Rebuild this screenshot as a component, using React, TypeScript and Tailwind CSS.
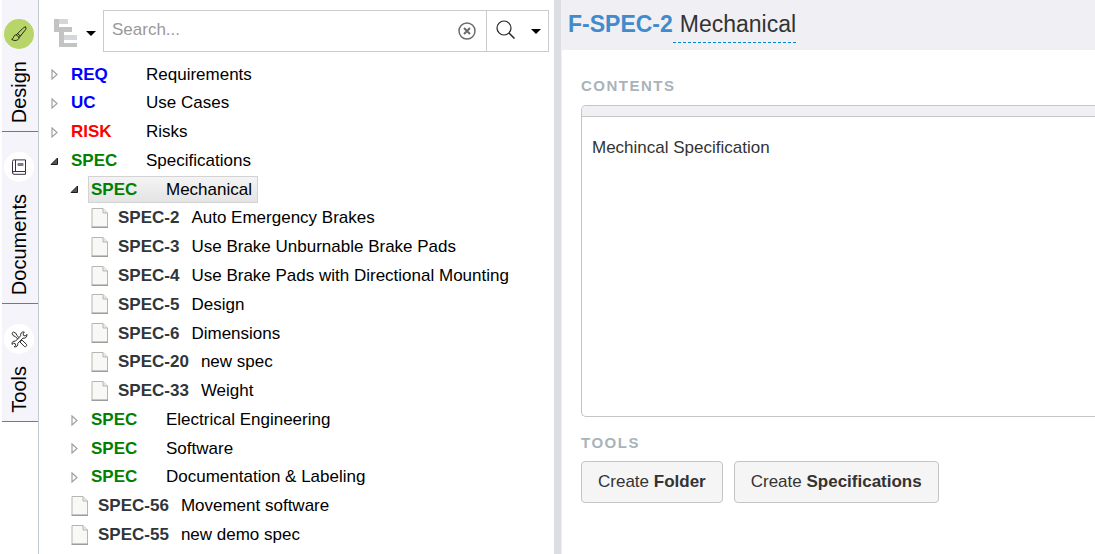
import type { ReactNode } from "react";

type Item = {
  level: number;
  kind: "closed" | "open" | "doc";
  code: string;
  label: string;
  tone: string;
  selected?: boolean;
};

const BLUE = "text-[#0000ff]";
const RED = "text-[#ff0000]";
const GREEN = "text-[#008000]";
const DARK = "text-[#30363a]";

const items: Item[] = [
  { level: 0, kind: "closed", code: "REQ", label: "Requirements", tone: BLUE },
  { level: 0, kind: "closed", code: "UC", label: "Use Cases", tone: BLUE },
  { level: 0, kind: "closed", code: "RISK", label: "Risks", tone: RED },
  { level: 0, kind: "open", code: "SPEC", label: "Specifications", tone: GREEN },
  { level: 1, kind: "open", code: "SPEC", label: "Mechanical", tone: GREEN, selected: true },
  { level: 2, kind: "doc", code: "SPEC-2", label: "Auto Emergency Brakes", tone: DARK },
  { level: 2, kind: "doc", code: "SPEC-3", label: "Use Brake Unburnable Brake Pads", tone: DARK },
  { level: 2, kind: "doc", code: "SPEC-4", label: "Use Brake Pads with Directional Mounting", tone: DARK },
  { level: 2, kind: "doc", code: "SPEC-5", label: "Design", tone: DARK },
  { level: 2, kind: "doc", code: "SPEC-6", label: "Dimensions", tone: DARK },
  { level: 2, kind: "doc", code: "SPEC-20", label: "new spec", tone: DARK },
  { level: 2, kind: "doc", code: "SPEC-33", label: "Weight", tone: DARK },
  { level: 1, kind: "closed", code: "SPEC", label: "Electrical Engineering", tone: GREEN },
  { level: 1, kind: "closed", code: "SPEC", label: "Software", tone: GREEN },
  { level: 1, kind: "closed", code: "SPEC", label: "Documentation & Labeling", tone: GREEN },
  { level: 1, kind: "doc", code: "SPEC-56", label: "Movement software", tone: DARK },
  { level: 1, kind: "doc", code: "SPEC-55", label: "new demo spec", tone: DARK },
];

const indents = ["pl-[10px]", "pl-[30px]", "pl-[50px]"];

function BrushIcon() {
  return (
    <svg width="18" height="18" viewBox="0 0 18 18" fill="none" stroke="#1d2410" strokeWidth="1" strokeLinejoin="round" strokeLinecap="round">
      <path d="M15.6 2.2c.8.5.6 1.500 0 2.400L10.400 11 7.600 8.600l5.200-5.200c.9-.9 1.900-1.600 2.800-1.200z" />
      <path d="M7.600 8.600L6.400 9.900l2.700 2.500L10.400 11" />
      <path d="M6.400 9.900c-1.700-.2-2.500.9-2.700 2-.2 1.100-.8 1.900-2 2.300 1.500 1.600 4.400 1.700 6.100.5 1-.7 1.400-1.500 1.300-2.300" />
    </svg>
  );
}

function BookIcon() {
  return (
    <svg width="14" height="16" viewBox="0 0 14 16" fill="none" stroke="#3a3140" strokeWidth="1">
      <path d="M2 .9h11.500v11.600H2A1.500 1.500 0 0 0 .5 14V2.400A1.500 1.500 0 0 1 2 .9z" />
      <path d="M3.500 1v11.500M13.500 12.500v2.800H2A1.400 1.400 0 0 1 .6 14" />
      <path d="M6 4.500h5v2H6z" fill="#8b8692" stroke="#77717f" />
    </svg>
  );
}

function ToolsIcon() {
  return (
    <svg width="17" height="17" viewBox="0 0 17 17" fill="none" stroke="#2b2b2b" strokeWidth="1" strokeLinejoin="round">
      <path d="M1 2.300L2.500 1l2.700 1.600.5 1.700 2.600 2.600M1 2.300l1.500 2.600 1.800.6 2.600 2.700M9.800 10.100l1.100-1.100 4.600 4.400c.9 1-.9 3.100-2.100 2.100L9 11z" />
      <path d="M13.300 1C11 .4 9 2.400 9.700 4.800L4.400 10.200C2.400 9.600.6 11.100 1 13.400l1.600-1.200 1.600.5.400 1.600L3.200 15.900c2.400.4 4-1.500 3.500-3.500L12 7.100c2.300.6 4.400-1.300 3.900-3.700L14.300 5l-1.700-.5-.5-1.700z" />
    </svg>
  );
}

function Caret() {
  return (
    <svg width="10" height="5" viewBox="0 0 10 5" className="shrink-0">
      <path d="M0 0h10L5 5z" fill="#000" />
    </svg>
  );
}

function Toggle({ open }: { open: boolean }) {
  return (
    <svg width="12" height="12" viewBox="0 0 12 12" className="shrink-0">
      {open ? (
        <path d="M8.500 3v6.500h-6.500z" fill="#555" stroke="#1c1c1c" strokeLinejoin="round" />
      ) : (
        <path d="M3 2l5 4.500L3 11z" fill="#fff" stroke="#a0a0a0" strokeWidth="1.200" />
      )}
    </svg>
  );
}

function DocIcon() {
  return (
    <svg width="18" height="20" viewBox="0 0 18 20" className="shrink-0">
      <path d="M1 .5h11l4.500 4.500v14H1z" fill="#f8f9f6" stroke="#b5b5b2" />
      <path d="M12 .5V5h4.500" fill="#e9e9e7" stroke="#b5b5b2" />
      <path d="M.5 19.300h16.500" stroke="#8d8d8b" />
    </svg>
  );
}

function Tab({ icon, label, height, active }: { icon: ReactNode; label: string; height: string; active?: boolean }) {
  return (
    <button type="button" className={`flex w-full flex-col items-center justify-end border-b border-[#77777f] bg-[#f4f4fa] pr-[2px] pb-2 ${height}`}>
      <span className={`mb-3 flex size-[30px] items-center justify-center rounded-full ${active ? "bg-[#b7d568]" : "bg-white"}`}>{icon}</span>
      <span className="rotate-180 text-[20px] leading-6 [writing-mode:vertical-rl]">{label}</span>
    </button>
  );
}

function TreeRow({ item }: { item: Item }) {
  const doc = item.kind === "doc";
  return (
    <li role="treeitem" aria-level={item.level + 1} aria-selected={!!item.selected} className={`flex items-center whitespace-nowrap ${indents[item.level]}`}>
      {doc ? (
        <span className="flex items-center pl-[2px]">
          <DocIcon />
          <b className={`ml-[9px] mr-3 ${item.tone}`}>{item.code}</b>
          <span>{item.label}</span>
        </span>
      ) : (
        <>
          <Toggle open={item.kind === "open"} />
          <span className={`ml-[7px] flex h-[27px] items-center border pl-[2px] pr-[5px] ${item.selected ? "border-[#d3d3d3] bg-linear-to-b from-[#f4f4f4] to-[#e4e4e4]" : "border-transparent"}`}>
            <b className={`w-[75px] ${item.tone}`}>{item.code}</b>
            <span>{item.label}</span>
          </span>
        </>
      )}
    </li>
  );
}

export default function App() {
  return (
    <div className="flex min-h-screen overflow-hidden bg-white font-['Liberation_Sans',Arial,sans-serif] text-[17px] text-black">
      <nav aria-label="Sections" className="w-[39px] shrink-0 border-r border-[#c3c9d0] pl-[2px]">
        <Tab icon={<BrushIcon />} label="Design" height="h-[132px]" active />
        <Tab icon={<BookIcon />} label="Documents" height="h-[172px]" />
        <Tab icon={<ToolsIcon />} label="Tools" height="h-[118px]" />
      </nav>

      <section className="w-[515px] shrink-0 pt-[10px]">
        <div className="flex items-center pl-[14px] pr-[5px]">
          <button type="button" aria-label="Tree view" className="flex w-[50px] items-center gap-[9px] pt-1">
            <svg width="24" height="29" viewBox="0 0 24 29" className="shrink-0">
              <path d="M1 0h5v13H1zM6 8h13v5H6zM6 13h5v15H6zM11 24h13v4H11z" fill="#c3c3c3" />
              <path d="M6 0h9v5H6zM11 16h13v5H11z" fill="#d3d6da" />
            </svg>
            <Caret />
          </button>
          <div className="flex h-[42px] flex-1 border border-[#c9cccf]">
            <input aria-label="Search" placeholder="Search..." className="min-w-0 flex-1 px-2 pb-[2px] outline-none placeholder:text-[#999]" />
            <button type="button" aria-label="Clear" className="pr-[10px]">
              <svg width="18" height="18" viewBox="0 0 18 18" fill="none" stroke="#6b6b6b">
                <circle cx="9" cy="9" r="8" strokeWidth="1.500" />
                <path d="M6 6l6 6M12 6l-6 6" strokeWidth="2" />
              </svg>
            </button>
            <button type="button" aria-label="Search options" className="flex w-[62px] items-center gap-4 border-l border-[#c9cccf] pl-[9px]">
              <svg width="19" height="19" viewBox="0 0 19 19" fill="none" stroke="#222" className="mb-1 shrink-0">
                <circle cx="8" cy="8" r="7" strokeWidth="1.200" />
                <path d="M13 13l5.500 5.500" strokeWidth="1.500" />
              </svg>
              <Caret />
            </button>
          </div>
        </div>
        <ul role="tree" className="mt-2 grid h-[489px] auto-rows-fr">
          {items.map((item) => (
            <TreeRow key={item.code + item.label} item={item} />
          ))}
        </ul>
      </section>

      <div className="w-[7px] shrink-0 bg-[#dbdfe4]" />

      <main className="min-w-0 flex-1 border-l border-[#f0eff4] text-[#333]">
        <header className="flex h-[50px] items-start bg-[#f0eff4] pl-[6px] pt-[6px] text-[23px] leading-9">
          <b className="text-[#428bca]">F-SPEC-2</b>
          <h1 className="border-b border-dashed border-b-[#0088cc] pl-[7px]">Mechanical</h1>
        </header>
        <div className="pl-[19px]">
          <h2 className="pt-[26px] text-[15px] font-bold leading-5 tracking-widest text-[#a9b3ba]">CONTENTS</h2>
          <div className="mt-[9px] h-[312px] overflow-hidden rounded-l-[5px] border border-r-0 border-[#c4c4c4]">
            <div className="h-[11px] border-b border-[#c4c4c4] bg-[#f0eff4]" />
            <p className="px-[10px] pt-[19px] leading-6">Mechincal Specification</p>
          </div>
          <h2 className="pt-4 text-[15px] font-bold leading-5 tracking-widest text-[#a9b3ba]">TOOLS</h2>
          <div className="mt-2 flex gap-[11px]">
            <button type="button" className="h-[42px] rounded-[4px] border border-[#c4c4c4] bg-[#f5f5f5] px-4">
              Create <b>Folder</b>
            </button>
            <button type="button" className="h-[42px] rounded-[4px] border border-[#c4c4c4] bg-[#f5f5f5] px-4">
              Create <b>Specifications</b>
            </button>
          </div>
        </div>
      </main>
    </div>
  );
}
